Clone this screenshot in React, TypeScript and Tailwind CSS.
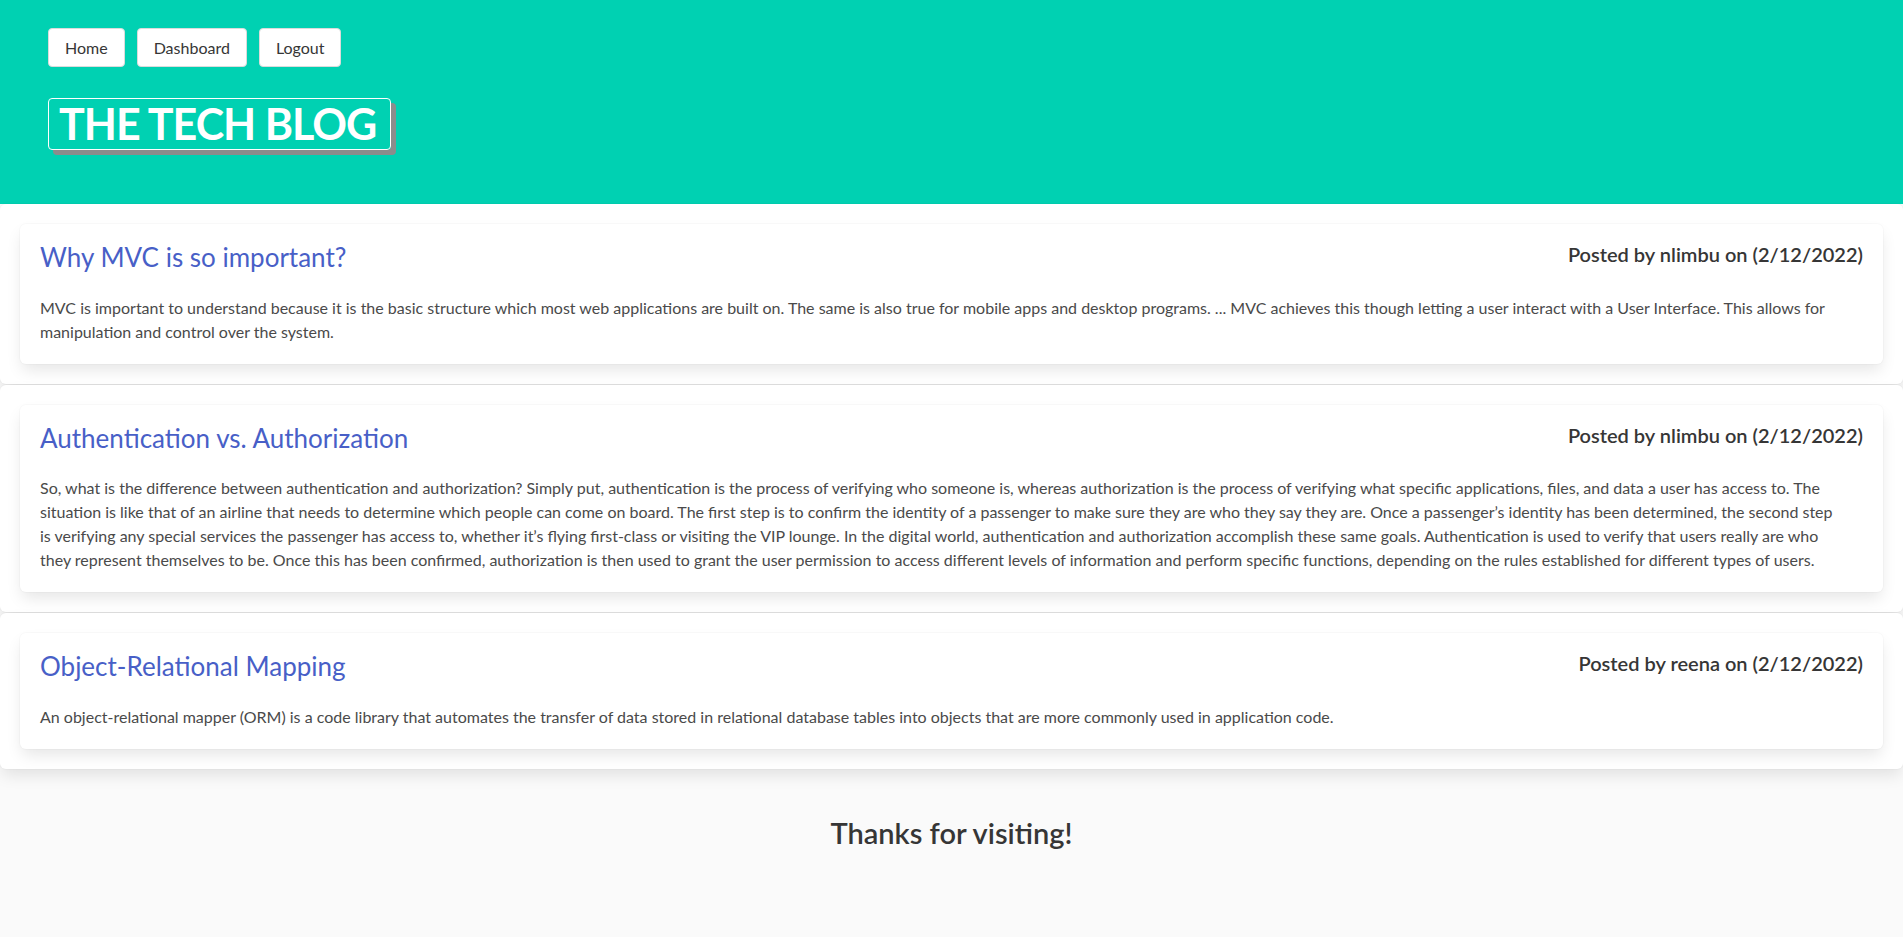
const posts = [
  {
    id: 1,
    title: "Why MVC is so important?",
    author: "nlimbu",
    date: "2/12/2022",
    body: "MVC is important to understand because it is the basic structure which most web applications are built on. The same is also true for mobile apps and desktop programs. ... MVC achieves this though letting a user interact with a User Interface. This allows for manipulation and control over the system.",
  },
  {
    id: 2,
    title: "Authentication vs. Authorization",
    author: "nlimbu",
    date: "2/12/2022",
    body: "So, what is the difference between authentication and authorization? Simply put, authentication is the process of verifying who someone is, whereas authorization is the process of verifying what specific applications, files, and data a user has access to. The situation is like that of an airline that needs to determine which people can come on board. The first step is to confirm the identity of a passenger to make sure they are who they say they are. Once a passenger’s identity has been determined, the second step is verifying any special services the passenger has access to, whether it’s flying first-class or visiting the VIP lounge. In the digital world, authentication and authorization accomplish these same goals. Authentication is used to verify that users really are who they represent themselves to be. Once this has been confirmed, authorization is then used to grant the user permission to access different levels of information and perform specific functions, depending on the rules established for different types of users.",
  },
  {
    id: 3,
    title: "Object-Relational Mapping",
    author: "reena",
    date: "2/12/2022",
    body: "An object-relational mapper (ORM) is a code library that automates the transfer of data stored in relational database tables into objects that are more commonly used in application code.",
  },
];

const navLinks = ["Home", "Dashboard", "Logout"];

export default function App() {
  return (
    <div className="min-h-screen bg-[#fafafa] font-['Lato',sans-serif] text-[#4a4a4a]">
      {/* Header */}
      <header className="h-[204px] bg-[#00d1b2] px-12 pt-7">
        <nav className="flex gap-3">
          {navLinks.map((l) => (
            <a
              key={l}
              href="#"
              className="flex h-[39px] items-center rounded border border-[#dbdbdb] bg-white px-4 text-base text-[#363636]"
            >
              {l}
            </a>
          ))}
        </nav>
        <h1 className="mt-[31px] inline-block rounded border border-white pl-[10px] pr-[14px] text-[43px] font-bold leading-[50px] tracking-[-1px] text-white shadow-[5px_5px_0_#8c8c8c]">
          THE TECH BLOG
        </h1>
      </header>

      {/* Posts */}
      <main className="flex flex-col gap-px">
        {posts.map((p) => (
          <section
            key={p.id}
            className="rounded-md bg-white p-5 shadow-[0_8px_16px_-2px_rgba(10,10,10,0.1),0_0_0_1px_rgba(10,10,10,0.02)]"
          >
            <article className="rounded-md bg-white px-5 pt-[18px] pb-5 shadow-[0_8px_16px_-2px_rgba(10,10,10,0.1),0_0_0_1px_rgba(10,10,10,0.02)]">
              <div className="flex items-start justify-between">
                <h2 className="text-[26px] leading-[31.5px] text-[#485fc7]">
                  {p.title}
                </h2>
                <p className="pt-px text-[20px] font-semibold leading-[1.125] text-[#363636]">
                  Posted by {p.author} on ({p.date})
                </p>
              </div>
              <p className="mt-[22px] pr-5 text-base leading-6">{p.body}</p>
            </article>
          </section>
        ))}
      </main>

      {/* Footer */}
      <footer className="bg-[#fafafa] px-6 pt-12 pb-24 text-center">
        <p className="text-[29px] font-semibold leading-[1.125] text-[#363636]">
          Thanks for visiting!
        </p>
      </footer>
    </div>
  );
}
